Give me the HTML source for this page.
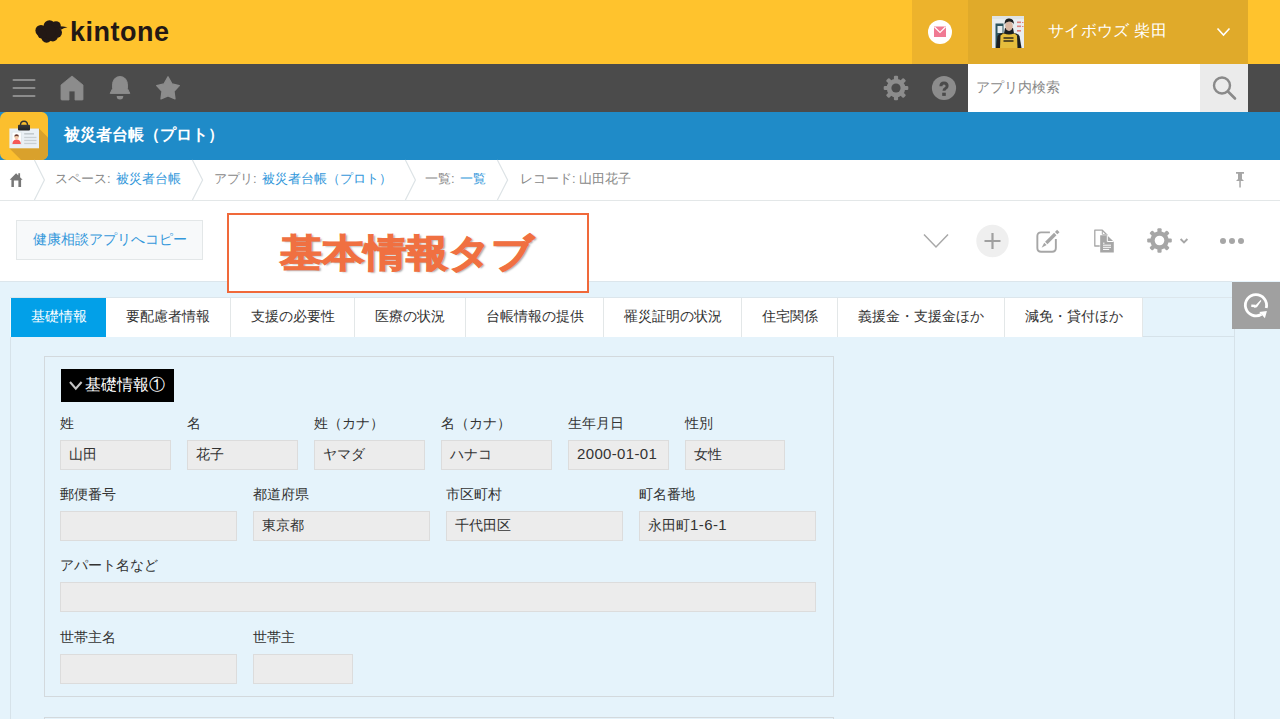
<!DOCTYPE html>
<html><head><meta charset="utf-8">
<style>
*{box-sizing:border-box;margin:0;padding:0}
html,body{width:1280px;height:719px;overflow:hidden;background:#e5f3fb;font-family:"Liberation Sans",sans-serif;color:#333;position:relative}
.a{position:absolute}
.t{position:absolute;white-space:nowrap;line-height:1}
svg{position:absolute;overflow:visible}
#hdr{left:0;top:0;width:1280px;height:64px;background:#ffc32d}
#mail{left:912px;top:0;width:56px;height:64px;background:#edb32c}
#user{left:968px;top:0;width:280px;height:64px;background:#e0aa2a}
#nav{left:0;top:64px;width:1280px;height:48px;background:#4b4b4b}
#search{left:968px;top:64px;width:232px;height:48px;background:#fff}
#sbtn{left:1200px;top:64px;width:48px;height:48px;background:#ebebeb}
#appbar{left:0;top:112px;width:1280px;height:48px;background:#1f8bc8}
#crumb{left:0;top:160px;width:1280px;height:41px;background:#fff;border-bottom:1px solid #e3e7e8}
#tool{left:0;top:201px;width:1280px;height:80px;background:#fff}
#cbtn{left:16px;top:220px;width:187px;height:40px;background:#f7f9fa;border:1px solid #e3e7e8}
#obox{left:227px;top:213px;width:362px;height:80px;border:2px solid #f0693a;background:#fff}
#strip{left:0;top:281px;width:1232px;height:1px;background:#dce6ec}
#tabline{left:10px;top:297px;width:1225px;height:1px;background:#dce6ec}
#panel{left:10px;top:336px;width:1225px;height:400px;border:1px solid #d6e2e9;border-bottom:none}
.tab{position:absolute;top:298px;height:39px;background:#fff;border-right:1px solid #e3e7e8;font-size:14px;line-height:37px;text-align:center;color:#333;white-space:nowrap}
#hist{left:1232px;top:282px;width:48px;height:47px;background:#a0a0a0}
#sec{left:44px;top:356px;width:790px;height:341px;border:1px solid #d3d9dd}
#sec2{left:44px;top:717px;width:790px;height:20px;border:1px solid #d3d9dd}
#lbl{left:61px;top:369px;width:113px;height:33px;background:#000}
.fl{position:absolute;font-size:14px;line-height:1;color:#333;white-space:nowrap}
.in{position:absolute;height:30px;background:#ececec;border:1px solid #dcdcdc;font-size:14px;line-height:26px;padding-left:8px;color:#333;white-space:nowrap}
</style></head><body>
<div class="a" id="hdr"></div>
<div class="a" id="mail"></div>
<div class="a" id="user"></div>
<div class="a" id="nav"></div>
<div class="a" id="search"></div>
<div class="a" id="sbtn"></div>
<div class="a" id="appbar"></div>
<div class="a" id="crumb"></div>
<div class="a" id="tool"></div>

<!-- logo -->
<svg style="left:0;top:0" width="200" height="64">
 <g fill="#231815">
  <circle cx="41" cy="30.5" r="5.6"/>
  <circle cx="49.5" cy="26.2" r="6"/>
  <circle cx="56" cy="26" r="4.8"/>
  <circle cx="56.8" cy="32.6" r="5.2"/>
  <circle cx="46.6" cy="37.3" r="5.4"/>
  <circle cx="52.8" cy="36.4" r="5"/>
  <circle cx="49" cy="31.5" r="7"/>
  <circle cx="42" cy="34" r="4.5"/>
  <path d="M59.5 26.2 Q63 26.4 67.5 27.2 Q63.5 27.8 60.5 30 Z"/>
 </g>
</svg>
<div class="t" style="left:70px;top:19px;font-size:27px;font-weight:bold;color:#231815;letter-spacing:0.5px">kintone</div>

<!-- mail -->
<svg style="left:0;top:0" width="1280" height="64">
 <circle cx="940" cy="32" r="12" fill="#fff"/>
 <rect x="934" y="26.5" width="12" height="10.5" fill="#f07a93"/>
 <path d="M934.5 27 L940 32.5 L945.5 27" stroke="#fff" stroke-width="1.1" fill="none"/>
</svg>
<!-- avatar -->
<svg style="left:992px;top:16px" width="32" height="32">
 <rect width="32" height="32" fill="#e9edef"/>
 <rect x="0" y="0" width="32" height="3" fill="#dfe3e5"/>
 <rect x="3.5" y="7.5" width="8" height="24.5" fill="#2f5660"/>
 <rect x="5.5" y="10" width="5" height="7" fill="#e6ecee"/>
 <g fill="#d9544e" opacity="0.7"><rect x="25" y="5.5" width="4" height="1.6"/><rect x="25" y="9.5" width="4" height="1.6"/><rect x="25" y="14" width="4" height="1.6"/><rect x="30" y="6" width="1.5" height="1"/><rect x="30" y="10" width="1.5" height="1"/></g>
 <path d="M4 32 L5.5 20 Q7 17.5 10 17 L22 17 Q26 17.5 27.5 20 L29.5 32 Z" fill="#1b1f22"/>
 <path d="M8 32 L8.5 19.5 Q11 17 15 16.5 L19 16.5 Q23 17 25 19.5 L25.5 32 Z" fill="#e6bd3c"/>
 <path d="M13 12 L21 12 L22 17.5 Q17 19.5 12 17.5 Z" fill="#1b1f22"/>
 <ellipse cx="17" cy="10" rx="3.8" ry="5" fill="#d9b7a3"/>
 <path d="M12.5 8.5 Q12.5 2 17 2.5 Q22 2.2 22 8.5 Q21 5.8 17 5.5 Q13.5 5.8 12.5 8.5Z" fill="#1e1e1e"/>
 <g fill="#5c4d22"><rect x="11.5" y="21" width="10" height="2"/><rect x="11.5" y="24" width="10" height="2"/></g>
</svg>
<div class="t" style="left:1048px;top:23px;font-size:16px;color:#fff;letter-spacing:0.3px">サイボウズ 柴田</div>
<svg style="left:0;top:0" width="1280" height="64">
 <path d="M1217.5 28.5 L1223.5 35 L1229.5 28.5" stroke="#fff" stroke-width="1.6" fill="none"/>
</svg>

<!-- nav icons -->
<svg style="left:0;top:0" width="1280" height="112">
 <g stroke="#8c8c8c" stroke-width="2" stroke-linecap="round">
  <line x1="13.5" y1="80" x2="34.5" y2="80"/>
  <line x1="13.5" y1="88" x2="34.5" y2="88"/>
  <line x1="13.5" y1="96" x2="34.5" y2="96"/>
 </g>
 <g fill="#8c8c8c">
  <path d="M72 76 L83 85 L83 99.5 Q83 100 82 100 L75 100 L75 91 L69 91 L69 100 L62 100 Q61 100 61 99 L61 85 Z" stroke="#8c8c8c" stroke-width="0.8" stroke-linejoin="round"/>
  <path d="M120 76.6 C115 76.6 112.6 80.5 112.6 85 L112.6 88.5 L110.2 93.4 L129.8 93.4 L127.4 88.5 L127.4 85 C127.4 80.5 125 76.6 120 76.6 Z" stroke="#8c8c8c" stroke-width="1" stroke-linejoin="round"/>
  <path d="M116.7 96 L123.3 96 Q123.3 99.5 120 99.5 Q116.7 99.5 116.7 96Z"/>
  <path d="M168 76.8 L171.9 83.9 L179.3 85.6 L174 91.3 L175 98.9 L168 95.8 L161 98.9 L162 91.3 L156.7 85.6 L164.1 83.9 Z" stroke="#8c8c8c" stroke-width="1.3" stroke-linejoin="round"/>
 </g>
 <!-- gear -->
 <g transform="translate(896,88)" fill="#8c8c8c">
  <g id="gt">
   <rect x="-2.1" y="-12.3" width="4.2" height="5" rx="1.1"/>
  </g>
  <use href="#gt" transform="rotate(45)"/>
  <use href="#gt" transform="rotate(90)"/>
  <use href="#gt" transform="rotate(135)"/>
  <use href="#gt" transform="rotate(180)"/>
  <use href="#gt" transform="rotate(225)"/>
  <use href="#gt" transform="rotate(270)"/>
  <use href="#gt" transform="rotate(315)"/>
  <circle r="9.3"/>
  <circle r="4.6" fill="#4b4b4b"/>
 </g>
 <circle cx="944" cy="88" r="12.1" fill="#8c8c8c"/>
 <path d="M940.9 86.2 Q940.9 82.9 944 82.9 Q947.1 82.9 947.1 85.9 Q947.1 87.7 945.4 88.5 Q944 89.2 944 90.8" stroke="#4b4b4b" stroke-width="3" fill="none"/>
 <rect x="942.2" y="92.7" width="3.6" height="3.2" fill="#4b4b4b"/>
 <!-- search -->
 <circle cx="1222" cy="85.5" r="8" stroke="#8a8a8a" stroke-width="2.4" fill="none"/>
 <line x1="1228" y1="91.5" x2="1235" y2="98.5" stroke="#8a8a8a" stroke-width="2.6" stroke-linecap="round"/>
</svg>
<div class="t" style="left:976px;top:80px;font-size:14px;color:#888">アプリ内検索</div>

<!-- app bar -->
<svg style="left:0;top:112px" width="48" height="48">
 <defs><clipPath id="ic"><rect width="48" height="48" rx="6.5"/></clipPath>
 <linearGradient id="cg" x1="0" y1="0" x2="0" y2="1"><stop offset="0" stop-color="#3a3a3a"/><stop offset="1" stop-color="#222"/></linearGradient></defs>
 <g clip-path="url(#ic)">
  <rect width="48" height="48" fill="#fbbf2e"/>
  <path d="M30 16.5 L39 16.5 L70 47.5 L70 70 L43.1 70 L9.4 36.3 Z" fill="#d9a12c"/>
  <rect x="9.4" y="16.5" width="29.6" height="19.8" fill="#eaf0f5"/>
  <path d="M20.5 13 Q20.5 9.2 24 9.2 Q27.5 9.2 27.5 13" stroke="#333" stroke-width="1.4" fill="none"/>
  <rect x="18" y="12.8" width="12" height="5.8" rx="1" fill="url(#cg)"/>
  <rect x="11.6" y="19.7" width="10.1" height="13" fill="#dfe6ea"/>
  <rect x="12.4" y="20.5" width="8.5" height="11.5" fill="#fff"/>
  <circle cx="16.6" cy="25" r="2.2" fill="#f3c9a8"/><path d="M14.3 24.6 Q14.3 22.2 16.6 22.2 Q18.9 22.2 18.9 24.6 Q16.6 23.6 14.3 24.6Z" fill="#6b3d32"/>
  <path d="M12.4 32 Q12.6 27.4 16.6 27.4 Q20.6 27.4 20.9 32 Z" fill="#f55a57"/>
  <rect x="24.2" y="21" width="9.8" height="1.6" fill="#c3cbcf"/>
  <rect x="24.2" y="24.8" width="12.3" height="1.3" fill="#c9d0d4"/>
  <rect x="24.2" y="27.8" width="12.3" height="1.3" fill="#c9d0d4"/>
  <rect x="24.2" y="30.8" width="12.3" height="1.3" fill="#c9d0d4"/>
 </g>
</svg>
<div class="t" style="left:64px;top:127px;font-size:16px;font-weight:bold;color:#fff">被災者台帳（プロト）</div>

<!-- breadcrumb -->
<svg style="left:0;top:0" width="1280" height="201">
 <path d="M16.1 173.2 L22.6 179.8 L21.1 179.8 L21.1 187 L18.4 187 L18.4 180.6 L13.9 180.6 L13.9 187 L11.4 187 L11.4 179.8 L9.7 179.8 Z M18.3 173.3 L20.1 173.3 L20.1 177.5 L18.3 175.6 Z" fill="#777"/>
 <g stroke="#dde3e6" stroke-width="1.2" fill="none">
  <path d="M34.4 160 L44.4 180 L34.4 200"/>
  <path d="M192.4 160 L202.6 180 L192.4 200"/>
  <path d="M405.4 160 L415.4 180 L405.4 200"/>
  <path d="M497.4 160 L507.6 180 L497.4 200"/>
 </g>
 <path d="M1236 172 L1244 172 L1244 173.8 L1242 173.8 L1242 179 L1244 181 L1236 181 L1238 179 L1238 173.8 L1236 173.8 Z" fill="#a6a6a6"/><rect x="1239.3" y="181" width="1.5" height="6.5" fill="#a6a6a6"/>
</svg>
<div class="t" style="left:55px;top:172px;font-size:13px;color:#888">スペース: <span style="color:#3498db;padding-left:2px">被災者台帳</span></div>
<div class="t" style="left:214px;top:172px;font-size:13px;color:#888">アプリ: <span style="color:#3498db;padding-left:2px">被災者台帳（プロト）</span></div>
<div class="t" style="left:425px;top:172px;font-size:13px;color:#888">一覧: <span style="color:#3498db;padding-left:2px">一覧</span></div>
<div class="t" style="left:520px;top:172px;font-size:13px;color:#888">レコード: 山田花子</div>

<!-- toolbar -->
<div class="a" id="cbtn"></div>
<div class="t" style="left:33px;top:232px;font-size:14px;color:#3498db">健康相談アプリへコピー</div>
<svg style="left:0;top:0" width="1280" height="281">
 <path d="M924 234.5 L936 247 L948 234.5" stroke="#a8a8a8" stroke-width="1.5" fill="none"/>
 <circle cx="992.5" cy="241" r="16.2" fill="#efefef"/>
 <path d="M984.5 241 L1000.5 241 M992.5 233 L992.5 249" stroke="#a0a0a0" stroke-width="2.2"/>
 <path d="M1049.9 232.35 L1041.1 232.35 Q1037.35 232.35 1037.35 236.1 L1037.35 248 Q1037.35 251.75 1041.1 251.75 L1052.1 251.75 Q1055.85 251.75 1055.85 248 L1055.85 238.9" stroke="#a6a6a6" stroke-width="1.9" fill="none"/>
 <g transform="translate(1041.6,247.7) rotate(-45)" fill="#a6a6a6">
  <path d="M0 0 L5.4 -1.7 L5.4 1.7 Z"/>
  <rect x="6.6" y="-1.7" width="12.7" height="3.4"/>
  <rect x="20.6" y="-1.7" width="3" height="3.4"/>
 </g>
 <!-- copy -->
 <path d="M1094.8 230.2 L1102.3 230.2 L1107 235 L1107 246 L1094.8 246 Z" stroke="#a6a6a6" stroke-width="1.3" fill="#fff" stroke-linejoin="round"/>
 <path d="M1102.3 230.5 L1102.3 234.5 L1106.5 234.5" stroke="#a6a6a6" stroke-width="1" fill="none"/>
 <path d="M1100.2 235.2 L1107.1 235.2 L1113.8 241.7 L1113.8 252.5 L1100.2 252.5 Z" fill="#a6a6a6" stroke="#fff" stroke-width="1" paint-order="stroke"/>
 <path d="M1107.3 235.5 L1107.3 241.5 L1113.5 241.5" stroke="#fff" stroke-width="1" fill="none"/>
 <path d="M1108 236.8 L1108 240.8 L1112.2 240.8 Z" fill="#a6a6a6"/>
 <path d="M1103 245.2 L1111 245.2 M1103 247.3 L1111 247.3 M1103 249.4 L1109.2 249.4 M1103 243.2 L1104.5 243.2" stroke="#fff" stroke-width="1"/>
 <!-- gear2 -->
 <g transform="translate(1159.5,240.5)" fill="#a6a6a6">
  <g id="gt2"><rect x="-2.1" y="-12.3" width="4.2" height="5" rx="1.1"/></g>
  <use href="#gt2" transform="rotate(45)"/>
  <use href="#gt2" transform="rotate(90)"/>
  <use href="#gt2" transform="rotate(135)"/>
  <use href="#gt2" transform="rotate(180)"/>
  <use href="#gt2" transform="rotate(225)"/>
  <use href="#gt2" transform="rotate(270)"/>
  <use href="#gt2" transform="rotate(315)"/>
  <circle r="9.2"/>
  <circle r="4.8" fill="#fff"/>
 </g>
 <path d="M1180.6 239 L1184 242.4 L1187.4 239" stroke="#a6a6a6" stroke-width="1.9" fill="none"/>
 <circle cx="1223" cy="241" r="3" fill="#a6a6a6"/>
 <circle cx="1232" cy="241" r="3" fill="#a6a6a6"/>
 <circle cx="1241" cy="241" r="3" fill="#a6a6a6"/>
</svg>

<!-- content -->
<div class="a" id="strip"></div>
<div class="a" id="tabline"></div>
<div class="a" id="panel"></div>
<div class="tab" style="left:10px;width:96px;background:#02a0e8;color:#fff;border-right:none;border-left:1px solid #f4fafd">基礎情報</div>
<div class="tab" style="left:106px;width:125px">要配慮者情報</div>
<div class="tab" style="left:231px;width:124px">支援の必要性</div>
<div class="tab" style="left:355px;width:111px">医療の状況</div>
<div class="tab" style="left:466px;width:138px">台帳情報の提供</div>
<div class="tab" style="left:604px;width:138px">罹災証明の状況</div>
<div class="tab" style="left:742px;width:96px">住宅関係</div>
<div class="tab" style="left:838px;width:167px">義援金・支援金ほか</div>
<div class="tab" style="left:1005px;width:138px">減免・貸付ほか</div>
<div class="a" id="hist"></div><div class="a" style="left:1234px;top:329px;width:1px;height:8px;background:#d6e2e9"></div>
<svg style="left:1232px;top:282px" width="48" height="47">
 <path d="M34.2 26 A10.6 10.6 0 1 0 29.5 32.3" stroke="#fff" stroke-width="2.8" fill="none"/>
 <path d="M27.3 30.1 L34.9 29 L32.9 36.3 Z" fill="#fff"/>
 <path d="M19.3 23.8 L23.7 24" stroke="#fff" stroke-width="2.6" stroke-linecap="butt"/>
 <path d="M22.6 25.2 L28.6 18.8 L24.6 24.6 Z" fill="#fff" stroke="#fff" stroke-width="1.2" stroke-linejoin="round"/>
</svg>

<div class="a" id="sec"></div>
<div class="a" id="sec2"></div>
<div class="a" id="lbl"></div>
<svg style="left:0;top:0" width="300" height="420">
 <path d="M70 382 L75.8 388.6 L81.6 382" stroke="#c4c4c4" stroke-width="2.1" fill="none"/>
</svg>
<div class="t" style="left:85px;top:377px;font-size:16px;color:#fff">基礎情報①</div>

<div class="fl" style="left:60px;top:416px">姓</div>
<div class="fl" style="left:187px;top:416px">名</div>
<div class="fl" style="left:314px;top:416px">姓（カナ）</div>
<div class="fl" style="left:441px;top:416px">名（カナ）</div>
<div class="fl" style="left:568px;top:416px">生年月日</div>
<div class="fl" style="left:685px;top:416px">性別</div>
<div class="in" style="left:60px;top:440px;width:111px">山田</div>
<div class="in" style="left:187px;top:440px;width:111px">花子</div>
<div class="in" style="left:314px;top:440px;width:111px">ヤマダ</div>
<div class="in" style="left:441px;top:440px;width:111px">ハナコ</div>
<div class="in" style="left:568px;top:440px;width:101px;font-size:15px;letter-spacing:0.35px">2000-01-01</div>
<div class="in" style="left:685px;top:440px;width:100px">女性</div>

<div class="fl" style="left:60px;top:487px">郵便番号</div>
<div class="fl" style="left:253px;top:487px">都道府県</div>
<div class="fl" style="left:446px;top:487px">市区町村</div>
<div class="fl" style="left:639px;top:487px">町名番地</div>
<div class="in" style="left:60px;top:511px;width:177px"></div>
<div class="in" style="left:253px;top:511px;width:177px">東京都</div>
<div class="in" style="left:446px;top:511px;width:177px">千代田区</div>
<div class="in" style="left:639px;top:511px;width:177px">永田町<span style="font-size:15px;letter-spacing:0.4px">1-6-1</span></div>

<div class="fl" style="left:60px;top:558px">アパート名など</div>
<div class="in" style="left:60px;top:582px;width:756px"></div>

<div class="fl" style="left:60px;top:630px">世帯主名</div>
<div class="fl" style="left:253px;top:630px">世帯主</div>
<div class="in" style="left:60px;top:654px;width:177px"></div>
<div class="in" style="left:253px;top:654px;width:100px"></div>
<div class="a" id="obox"></div>
<div class="t" style="left:280px;top:232px;font-size:42px;font-weight:bold;color:#f07041;-webkit-text-stroke:1.3px #f07041;transform:scaleY(0.9);text-shadow:2px 2px 2px rgba(0,0,0,0.35)">基本情報タブ</div>

</body></html>
